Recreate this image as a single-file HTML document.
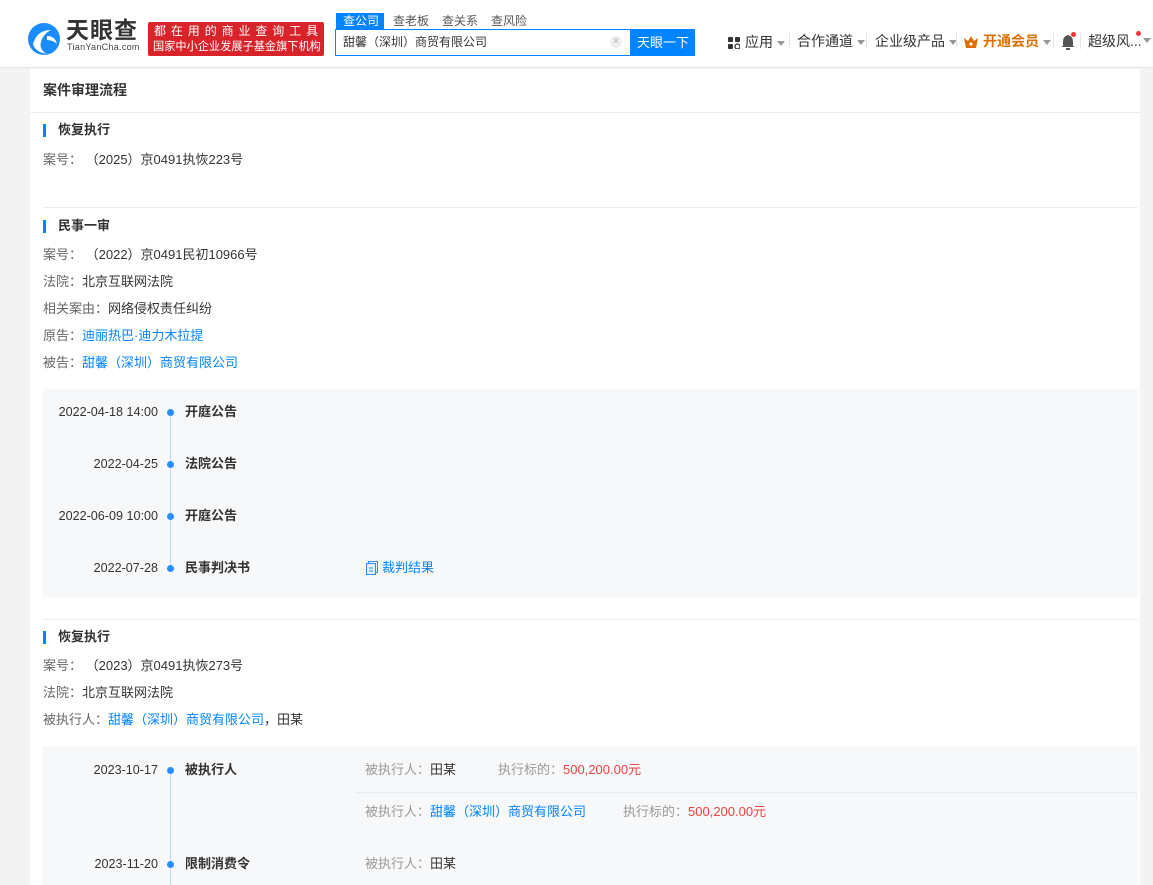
<!DOCTYPE html>
<html><head><meta charset="utf-8"><style>
*{margin:0;padding:0;box-sizing:border-box}
body{width:1153px;height:885px;overflow:hidden;background:#f3f3f3;font-family:"Liberation Sans","Noto Sans CJK SC",sans-serif;font-size:13px;color:#333;position:relative}
.a{position:absolute;white-space:nowrap;line-height:18px}
#hd{position:absolute;left:0;top:0;width:1153px;height:68px;background:#fff;border-bottom:1px solid #e6e6e6}
#card{position:absolute;left:30px;top:69px;width:1110px;height:816px;background:#fff}
.bar{position:absolute;width:3px;height:13px;background:#0084ff}
.h{font-weight:bold;font-size:13px;color:#333}
.l{color:#666}
.b{color:#0084ff}
.r{color:#f04040}
.g{color:#999}
.hr{position:absolute;height:1px;background:#eee}
.box{position:absolute;left:43px;width:1095px;background:#f7f8fa}
.dot{position:absolute;width:7px;height:7px;border-radius:50%;background:#2b8cff}
.vl{position:absolute;width:1px;background:#b9dbff;left:170px}
.dt{position:absolute;right:995px;white-space:nowrap;line-height:18px;font-size:12.6px}
.nav{font-size:14px;color:#333}
.tri{display:inline-block;width:0;height:0;border-left:4px solid transparent;border-right:4px solid transparent;border-top:5px solid #999;vertical-align:middle;margin-left:4px}
.sep{position:absolute;top:33px;width:1px;height:16px;background:#e5e5e5}
</style></head><body>
<div id="hd">
<svg style="position:absolute;left:27px;top:22px" width="36" height="34" viewBox="0 0 36 34"><circle cx="17" cy="17" r="16" fill="#1a8cff"/><path d="M6 22 Q10 8 24 8 Q16 12 14 20 Q12 28 20 32 Q8 30 6 22Z" fill="#fff"/><path d="M20 14 Q28 14 30 22 Q26 18 20 18Z" fill="#fff"/></svg>
<div class="a" style="left:66px;top:17px;font-size:23px;line-height:26px;font-weight:bold;color:#333;letter-spacing:1px">天眼查</div>
<div class="a" style="left:67px;top:42px;font-size:9px;line-height:10px;color:#444;letter-spacing:.3px">TianYanCha.com</div>
<div style="position:absolute;left:148px;top:22px;width:176px;height:34px;background:#d9232a;border-radius:2px"></div>
<div class="a" style="left:154px;top:23px;font-size:12px;line-height:16px;color:#fff;letter-spacing:4.9px">都在用的商业查询工具</div>
<div class="a" style="left:153px;top:39px;font-size:11.2px;line-height:16px;color:#fff">国家中小企业发展子基金旗下机构</div>
<div style="position:absolute;left:336px;top:13px;width:48px;height:17px;background:#0084ff"></div>
<div class="a" style="left:343px;top:12px;font-size:12px;color:#fff">查公司</div>
<div class="a" style="left:393px;top:12px;font-size:12px;color:#555">查老板</div>
<div class="a" style="left:442px;top:12px;font-size:12px;color:#555">查关系</div>
<div class="a" style="left:491px;top:12px;font-size:12px;color:#555">查风险</div>
<div style="position:absolute;left:335px;top:29px;width:296px;height:27px;border:1px solid #0084ff;background:#fff"></div>
<div class="a" style="left:343px;top:33px;font-size:12px;color:#333">甜馨（深圳）商贸有限公司</div>
<div style="position:absolute;left:610px;top:36px;width:12px;height:12px;border-radius:50%;background:#eee;color:#aaa;font-size:10px;line-height:12px;text-align:center">×</div>
<div style="position:absolute;left:631px;top:29px;width:64px;height:27px;background:#0084ff;color:#fff;font-size:13px;line-height:27px;text-align:center">天眼一下</div>
<svg style="position:absolute;left:728px;top:37px" width="12" height="12"><rect x="0" y="0" width="5" height="5" rx="1" fill="#333"/><rect x="7" y="0" width="5" height="5" rx="1" fill="#333"/><rect x="0" y="7" width="5" height="5" rx="1" fill="#333"/><circle cx="9.5" cy="9.5" r="2.5" fill="none" stroke="#333" stroke-width="1.3"/></svg>
<div class="a nav" style="left:745px;top:33px">应用<span class="tri"></span></div>
<div class="sep" style="left:789px"></div>
<div class="a nav" style="left:797px;top:32px">合作通道<span class="tri"></span></div>
<div class="sep" style="left:866px"></div>
<div class="a nav" style="left:875px;top:32px">企业级产品<span class="tri"></span></div>
<div class="sep" style="left:956px"></div>
<svg style="position:absolute;left:964px;top:36px" width="14" height="12"><path d="M0 2 L4 5 L7 0 L10 5 L14 2 L12 12 L2 12Z" fill="#e06d00"/><path d="M5 8 L7 6 L9 8 L7 10Z" fill="#fff"/></svg>
<div class="a nav" style="left:983px;top:32px;color:#e06d00;font-weight:bold">开通会员<span class="tri"></span></div>
<div class="sep" style="left:1053px"></div>
<svg style="position:absolute;left:1061px;top:34px" width="14" height="16"><path d="M7 1 Q12 2 12 8 L12 12 L14 13 L0 13 L2 12 L2 8 Q2 2 7 1Z" fill="#555"/><rect x="5" y="14" width="4" height="2" fill="#555"/></svg>
<div style="position:absolute;left:1071px;top:32px;width:5px;height:5px;border-radius:50%;background:#f33"></div>
<div class="sep" style="left:1080px"></div>
<div class="a nav" style="left:1088px;top:32px">超级风...</div>
<div style="position:absolute;left:1136px;top:31px;width:5px;height:5px;border-radius:50%;background:#f33"></div>
<span class="tri" style="position:absolute;left:1139px;top:38px"></span>
</div>

<div id="card"></div>
<div class="a h" style="left:43px;top:81px;font-size:14px">案件审理流程</div>
<div class="hr" style="left:30px;top:112px;width:1110px"></div>

<div class="bar" style="left:43px;top:124px"></div>
<div class="a h" style="left:58px;top:121px">恢复执行</div>
<div class="a" style="left:43px;top:151px"><span class="l">案号：</span> （2025）京0491执恢223号</div>
<div class="hr" style="left:43px;top:207px;width:1095px"></div>

<div class="bar" style="left:43px;top:220px"></div>
<div class="a h" style="left:58px;top:217px">民事一审</div>
<div class="a" style="left:43px;top:246px"><span class="l">案号：</span> （2022）京0491民初10966号</div>
<div class="a" style="left:43px;top:273px"><span class="l">法院：</span>北京互联网法院</div>
<div class="a" style="left:43px;top:300px"><span class="l">相关案由：</span>网络侵权责任纠纷</div>
<div class="a" style="left:43px;top:327px"><span class="l">原告：</span><span class="b">迪丽热巴·迪力木拉提</span></div>
<div class="a" style="left:43px;top:354px"><span class="l">被告：</span><span class="b">甜馨（深圳）商贸有限公司</span></div>

<div class="box" style="top:389px;height:208px"></div>
<div class="vl" style="top:412px;height:156px"></div>
<div class="dt" style="top:403px">2022-04-18 14:00</div><div class="dot" style="left:167px;top:409px"></div><div class="a h" style="left:185px;top:403px">开庭公告</div>
<div class="dt" style="top:455px">2022-04-25</div><div class="dot" style="left:167px;top:461px"></div><div class="a h" style="left:185px;top:455px">法院公告</div>
<div class="dt" style="top:507px">2022-06-09 10:00</div><div class="dot" style="left:167px;top:513px"></div><div class="a h" style="left:185px;top:507px">开庭公告</div>
<div class="dt" style="top:559px">2022-07-28</div><div class="dot" style="left:167px;top:565px"></div><div class="a h" style="left:185px;top:559px">民事判决书</div>
<svg style="position:absolute;left:366px;top:561px" width="12" height="14"><rect x="2.5" y="0.5" width="9" height="11" fill="none" stroke="#2b8cff"/><rect x="0.5" y="2.5" width="9" height="11" fill="#e8f2ff" stroke="#2b8cff"/><path d="M3 7h4M3 10h4" stroke="#2b8cff"/></svg>
<div class="a b" style="left:382px;top:559px">裁判结果</div>

<div class="hr" style="left:43px;top:619px;width:1095px"></div>
<div class="bar" style="left:43px;top:631px"></div>
<div class="a h" style="left:58px;top:628px">恢复执行</div>
<div class="a" style="left:43px;top:657px"><span class="l">案号：</span> （2023）京0491执恢273号</div>
<div class="a" style="left:43px;top:684px"><span class="l">法院：</span>北京互联网法院</div>
<div class="a" style="left:43px;top:711px"><span class="l">被执行人：</span><span class="b">甜馨（深圳）商贸有限公司</span>，田某</div>

<div class="box" style="top:746px;height:139px"></div>
<div class="vl" style="top:770px;height:115px"></div>
<div class="dt" style="top:761px">2023-10-17</div><div class="dot" style="left:167px;top:767px"></div><div class="a h" style="left:185px;top:761px">被执行人</div>
<div class="a" style="left:365px;top:761px"><span class="g">被执行人：</span>田某</div>
<div class="a" style="left:498px;top:761px"><span class="g">执行标的：</span><span class="r">500,200.00元</span></div>
<div class="hr" style="left:355px;top:792px;width:783px;background:#e8ebf0"></div>
<div class="a" style="left:365px;top:803px"><span class="g">被执行人：</span><span class="b">甜馨（深圳）商贸有限公司</span></div>
<div class="a" style="left:623px;top:803px"><span class="g">执行标的：</span><span class="r">500,200.00元</span></div>
<div class="dt" style="top:855px">2023-11-20</div><div class="dot" style="left:167px;top:861px"></div><div class="a h" style="left:185px;top:855px">限制消费令</div>
<div class="a" style="left:365px;top:855px"><span class="g">被执行人：</span>田某</div>
</body></html>
